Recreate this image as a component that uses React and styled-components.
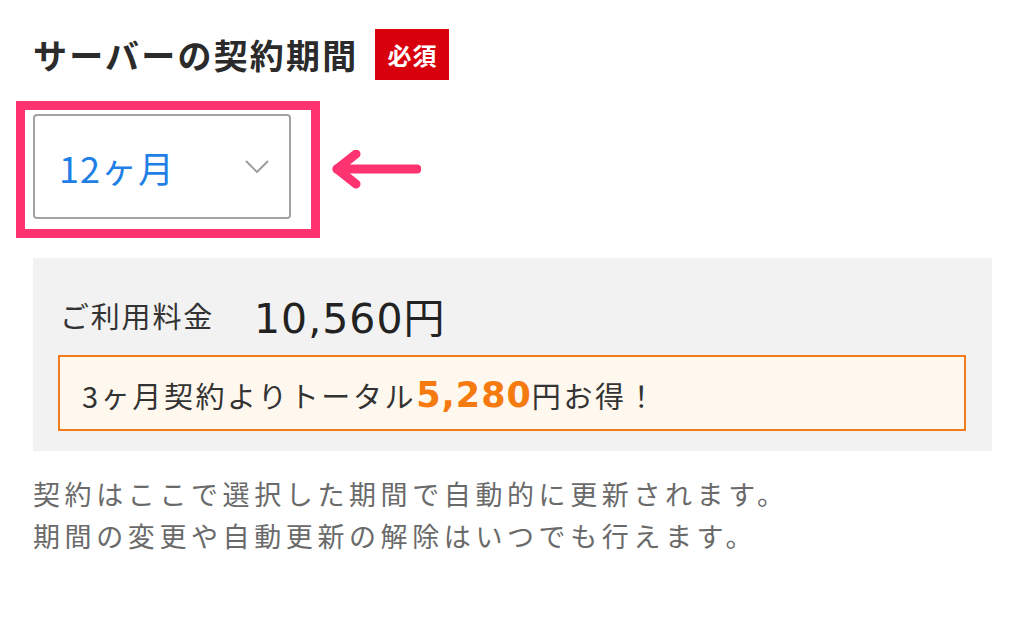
import React from 'react'
import styled, { createGlobalStyle } from 'styled-components'

const GlobalStyle = createGlobalStyle`
  html, body {
    margin: 0;
    padding: 0;
    background: #fff;
  }
  body {
    font-family: "Noto Sans CJK JP", "Noto Sans", sans-serif;
    color: #333;
  }
`

const Page = styled.div`
  width: 1024px;
  height: 633px;
  padding: 29px 32px 0 33px;
  box-sizing: border-box;
  overflow: hidden;
`

const TitleRow = styled.div`
  display: flex;
  align-items: center;
  gap: 17px;
  height: 51px;
`

const Title = styled.h2`
  margin: 0;
  font-size: 34px;
  font-weight: 700;
  letter-spacing: 2.2px;
  color: #2b2b2b;
  line-height: 1;
`

const Badge = styled.span`
  display: flex;
  align-items: center;
  justify-content: center;
  width: 74px;
  height: 51px;
  background: #d9000d;
  color: #fff;
  font-size: 24px;
  font-weight: 700;
  letter-spacing: 1px;
`

const SelectRow = styled.div`
  display: flex;
  align-items: center;
  margin: 21px 0 0 -17px;
  gap: 11px;
`

const Highlight = styled.div`
  border: 9px solid #ff3370;
  padding: 4px 20px 10px 8px;
`

const Select = styled.div`
  width: 258px;
  height: 105px;
  box-sizing: border-box;
  border: 2px solid #a3a3a3;
  border-radius: 4px;
  background: #fff;
  display: flex;
  align-items: center;
  justify-content: space-between;
  padding: 0 20px 0 24px;
`

const SelectValue = styled.span`
  font-size: 36px;
  color: #1f7fe6;
  letter-spacing: 1px;
`

const Panel = styled.div`
  margin-top: 20px;
  background: #f2f2f2;
  padding: 28px 26px 20px 25px;
`

const PriceRow = styled.div`
  display: flex;
  align-items: center;
  gap: 40px;
  padding-left: 2px;
  height: 58px;
`

const PriceLabel = styled.span`
  font-size: 29px;
  letter-spacing: 1.8px;
  color: #333;
`

const PriceValue = styled.span`
  font-family: "DejaVu Sans", "Noto Sans CJK JP", sans-serif;
  font-size: 41px;
  letter-spacing: 1px;
  color: #222;
`

const Saving = styled.div`
  margin-top: 11px;
  height: 76px;
  box-sizing: border-box;
  border: 2px solid #f37b1d;
  background: #fff8ef;
  display: flex;
  align-items: center;
  padding: 4px 0 0 22px;
  font-size: 29px;
  letter-spacing: 2.6px;
  color: #333;
`

const SavingAmount = styled.strong`
  font-family: "DejaVu Sans", "Noto Sans CJK JP", sans-serif;
  font-size: 35px;
  font-weight: 700;
  color: #f57a0f;
  letter-spacing: 1px;
`

const Note = styled.p`
  margin: 22px 0 0;
  font-size: 27px;
  line-height: 42px;
  letter-spacing: 4.6px;
  color: #6a6a6a;
`

const Chevron = () => (
  <svg width="24" height="14" viewBox="0 0 24 14" fill="none">
    <polyline points="1.5,1.5 12,12 22.5,1.5" stroke="#9a9a9a" strokeWidth="1.8" strokeLinecap="round" strokeLinejoin="round" />
  </svg>
)

const Arrow = () => (
  <svg width="90" height="40" viewBox="0 0 90 40" fill="none">
    <g stroke="#ff3370" strokeWidth="9" strokeLinecap="round" strokeLinejoin="round">
      <line x1="6" y1="19" x2="86" y2="19" />
      <polyline points="25,4 6,19 25,34" />
    </g>
  </svg>
)

export default function App() {
  return (
    <>
      <GlobalStyle />
      <Page>
        <TitleRow>
          <Title>サーバーの契約期間</Title>
          <Badge>必須</Badge>
        </TitleRow>
        <SelectRow>
          <Highlight>
            <Select>
              <SelectValue>12ヶ月</SelectValue>
              <Chevron />
            </Select>
          </Highlight>
          <Arrow />
        </SelectRow>
        <Panel>
          <PriceRow>
            <PriceLabel>ご利用料金</PriceLabel>
            <PriceValue>10,560円</PriceValue>
          </PriceRow>
          <Saving>
            3ヶ月契約よりトータル<SavingAmount>5,280</SavingAmount>円お得！
          </Saving>
        </Panel>
        <Note>
          契約はここで選択した期間で自動的に更新されます。
          <br />
          期間の変更や自動更新の解除はいつでも行えます。
        </Note>
      </Page>
    </>
  )
}
